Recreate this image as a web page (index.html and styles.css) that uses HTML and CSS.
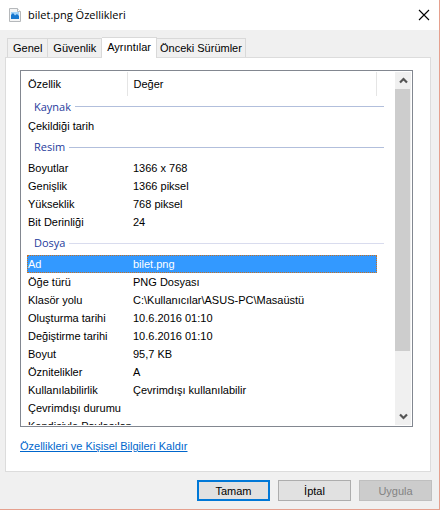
FILE: index.html
```html
<!DOCTYPE html>
<html lang="tr">
<head>
<meta charset="utf-8">
<title>bilet.png Özellikleri</title>
<link rel="stylesheet" href="styles.css">
</head>
<body>
<main class="dialog">
  <header class="titlebar">
    <svg class="file-icon" width="12" height="14" viewBox="0 0 12 14" aria-hidden="true">
      <path d="M.5.5h8l3 3v10H.5z" fill="#f5f5f5" stroke="#b5b8bb"/>
      <path d="M8.500.500v3h3" fill="#fff" stroke="#b5b8bb"/>
      <path d="M2 4h8v7H2z" fill="#a4d3f7"/>
      <path d="M2 7l2-2 2 2.500L8 6l2 2v3H2z" fill="#1878cf"/>
    </svg>
    <h1 class="title">bilet.png Özellikleri</h1>
    <button class="close" type="button" aria-label="Kapat">
      <svg width="12" height="12" viewBox="0 0 12 12"><path d="M1 1l10 10M11 1L1 11" fill="none" stroke="#000" stroke-width="1.100"/></svg>
    </button>
  </header>

  <div class="content">
    <nav class="tabs" role="tablist">
      <button class="tab" type="button" role="tab">Genel</button>
      <button class="tab" type="button" role="tab">Güvenlik</button>
      <button class="tab active" type="button" role="tab" aria-selected="true">Ayrıntılar</button>
      <button class="tab" type="button" role="tab">Önceki Sürümler</button>
    </nav>

    <section class="panel">
      <div class="listbox">
        <div class="viewport">
          <table class="props">
            <colgroup><col class="col-name"><col></colgroup>
            <thead><tr><th>Özellik</th><th>Değer</th></tr></thead>
            <tbody>
              <tr class="group"><th colspan="2"><div class="group-label">Kaynak</div></th></tr>
              <tr><td>Çekildiği tarih</td><td></td></tr>
              <tr class="group"><th colspan="2"><div class="group-label">Resim</div></th></tr>
              <tr><td>Boyutlar</td><td>1366 x 768</td></tr>
              <tr><td>Genişlik</td><td>1366 piksel</td></tr>
              <tr><td>Yükseklik</td><td>768 piksel</td></tr>
              <tr><td>Bit Derinliği</td><td>24</td></tr>
              <tr class="group light"><th colspan="2"><div class="group-label">Dosya</div></th></tr>
              <tr class="selected"><td>Ad</td><td>bilet.png</td></tr>
              <tr><td>Öğe türü</td><td>PNG Dosyası</td></tr>
              <tr><td>Klasör yolu</td><td>C:\Kullanıcılar\ASUS-PC\Masaüstü</td></tr>
              <tr><td>Oluşturma tarihi</td><td>10.6.2016 01:10</td></tr>
              <tr><td>Değiştirme tarihi</td><td>10.6.2016 01:10</td></tr>
              <tr><td>Boyut</td><td>95,7 KB</td></tr>
              <tr><td>Öznitelikler</td><td>A</td></tr>
              <tr><td>Kullanılabilirlik</td><td>Çevrimdışı kullanılabilir</td></tr>
              <tr><td>Çevrimdışı durumu</td><td></td></tr>
              <tr><td>Kendisiyle Paylaşılan</td><td></td></tr>
            </tbody>
          </table>
        </div>
        <div class="scrollbar">
          <button class="arrow" type="button" aria-label="Yukarı kaydır">
            <svg width="9" height="7" viewBox="0 0 9 7"><path d="M1 5.500l3.500-3.500L8 5.500" fill="none" stroke="#555" stroke-width="2.200"/></svg>
          </button>
          <div class="track"><div class="thumb"></div></div>
          <button class="arrow" type="button" aria-label="Aşağı kaydır">
            <svg width="9" height="7" viewBox="0 0 9 7"><path d="M1 1.500l3.500 3.500L8 1.500" fill="none" stroke="#555" stroke-width="2.200"/></svg>
          </button>
        </div>
      </div>
      <a class="link" href="#">Özellikleri ve Kişisel Bilgileri Kaldır</a>
    </section>

    <footer class="actions">
      <button class="button primary" type="button">Tamam</button>
      <button class="button" type="button">İptal</button>
      <button class="button" type="button" disabled>Uygula</button>
    </footer>
  </div>
</main>
</body>
</html>
```

FILE: styles.css
```css
* { box-sizing: border-box; }

body {
  margin: 0;
  font: 11px/14px "Liberation Sans", Arial, sans-serif;
  color: #000;
}

button {
  margin: 0;
  padding: 0;
  font: inherit;
  color: inherit;
}

.dialog {
  display: flex;
  flex-direction: column;
  height: 100vh;
  background: #f0f0f0;
  border: solid #e6a08e;
  border-width: 0 1px 1px 0;
}

.titlebar {
  display: flex;
  align-items: center;
  height: 30px;
  padding: 0 9px;
  background: #fff;
}

.title {
  flex: 1;
  margin: 0 0 0 7px;
  font: 11px/16px "Open Sans", "Noto Sans", sans-serif;
}

.close {
  display: flex;
  border: 0;
  background: none;
}

.content {
  flex: 1;
  display: flex;
  flex-direction: column;
  min-height: 0;
  padding: 7px 8px 8px 5px;
}

.tabs {
  display: flex;
  align-items: flex-end;
  padding-left: 2px;
}

.tab {
  height: 19px;
  padding: 0 5px;
  border: 1px solid #d9d9d9;
  border-width: 1px 1px 0 0;
  background: #f0f0f0;
  white-space: nowrap;
}

.tab:first-child { border-left-width: 1px; }

.tab.active {
  position: relative;
  height: 21px;
  margin-bottom: -1px;
  padding: 0 5px 3px;
  background: #fff;
}

.tab:last-child { padding: 0 3px; }

.panel {
  flex: 1;
  display: flex;
  flex-direction: column;
  align-items: flex-start;
  min-height: 0;
  padding: 12px 17px 18px 14px;
  border: 1px solid #dcdcdc;
  background: #fff;
}

.listbox {
  flex: 1;
  display: flex;
  align-self: stretch;
  min-height: 0;
  padding: 1px;
  border: 1px solid #828790;
}

.viewport {
  flex: 1;
  overflow: hidden;
  padding: 0 18px 0 5px;
}

.props {
  width: 100%;
  table-layout: fixed;
  border-collapse: collapse;
}

.col-name { width: 100px; }

.props td,
.props thead th {
  height: 18px;
  padding: 0 0 0 1px;
  font-weight: normal;
  text-align: left;
  white-space: nowrap;
}

.props td + td,
.props thead th + th { padding-left: 6px; }

.props thead th {
  height: 24px;
  border-right: 1px solid #e5e5e5;
}

.group th {
  height: 24px;
  padding: 0 0 0 7px;
  font: 11px/16px "Open Sans", "Noto Sans", sans-serif;
  color: #1e3a9c;
  text-align: left;
}

.props tbody .group:first-child th { height: 21px; }

.group-label {
  display: flex;
  align-items: center;
  gap: 4px;
  margin-right: -7px;
}

.group-label::after {
  content: "";
  flex: 1;
  height: 1px;
  background: #b2bfdc;
}

.light .group-label::after { background: #d9dcee; }

.selected {
  outline: 1px dotted #c87020;
  outline-offset: -1px;
  background: #3399ff;
  color: #fff;
}

.scrollbar {
  display: flex;
  flex-direction: column;
  width: 16px;
  background: #f0f0f0;
}

.arrow {
  display: flex;
  align-items: center;
  justify-content: center;
  height: 17px;
  border: 0;
  background: none;
}

.track { flex: 1; }

.thumb {
  width: 15px;
  height: 82%;
  background: #cdcdcd;
}

.link {
  margin-top: 12px;
  color: #0066cc;
}

.actions {
  display: flex;
  justify-content: flex-end;
  gap: 8px;
  margin-top: 8px;
  margin-right: -1px;
}

.button {
  width: 73px;
  height: 21px;
  border: 1px solid #adadad;
  background: #e1e1e1;
}

.primary { border: 2px solid #0078d7; }

.button:disabled {
  border-color: #bfbfbf;
  background: #cccccc;
  color: #838383;
}
```
